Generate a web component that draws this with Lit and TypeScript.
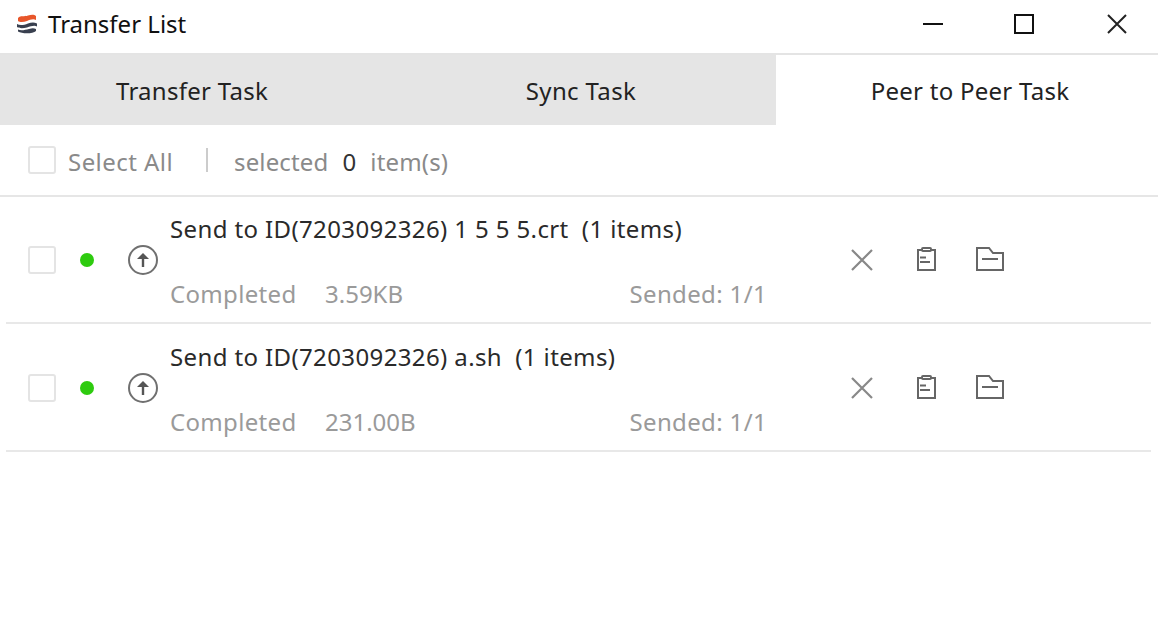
import { LitElement, html, css } from "lit";
import { customElement } from "lit/decorators.js";

const rows = [
  { title: "Send to ID(7203092326) 1 5 5 5.crt\u00a0\u00a0(1 items)", size: "3.59KB" },
  { title: "Send to ID(7203092326) a.sh\u00a0\u00a0(1 items)", size: "231.00B" },
];

@customElement("app-root")
export class AppRoot extends LitElement {
  static styles = css`
    :host { display: block; width: 1158px; height: 635px; background: #fff; overflow: hidden;
      font-family: "Noto Sans", "Open Sans", sans-serif; color: #222; }
    * { box-sizing: border-box; }
    .titlebar { height: 55px; display: flex; align-items: center; border-bottom: 2px solid #e4e4e4; padding: 0 31px 5px 16px; }
    .logo { width: 22px; height: 22px; display: block; }
    .title { margin: 0 0 2px 10px; font-size: 24px; color: #111; flex: 1; }
    .winbtns { display: flex; gap: 71px; }
    .winbtn { display: block; width: 20px; height: 20px; }
    .winbtn.close { margin-left: 2px; }
    .tabs { display: grid; grid-template-columns: 388px 388px 382px; height: 70px; }
    .tab { background: #e5e5e5; display: flex; align-items: center; justify-content: center; font-size: 24px; color: #222; letter-spacing: 0.27px; }
    .tab.first { padding-right: 4px; }
    .tab.second { padding-right: 2px; letter-spacing: 0.35px; }
    .tab.active { background: #fff; padding-left: 6px; }
    .toolbar { height: 72px; display: flex; align-items: center; padding-left: 28px; border-bottom: 2px solid #e6e6e6; font-size: 24px; color: #8a8a8a; }
    .check { width: 28px; height: 28px; border: 2px solid #e4e4e4; border-radius: 3px; flex: none; background: #fff; }
    .selall { margin: 2px 0 0 12px; width: 138px; letter-spacing: 0.45px; }
    .sep { width: 2px; height: 24px; background: #ccc; }
    .selected { margin: 2px 0 0 26px; letter-spacing: 0.15px; display: flex; gap: 14px; }
    .count { color: #333; }
    .rows { margin-top: -1px; }
    .row { height: 128px; margin: 0 7px 0 6px; border-bottom: 2px solid #e8e8e8; display: flex; align-items: center; padding: 2px 0 0 22px; }
    .dot { width: 14px; height: 14px; border-radius: 50%; background: #2ecb0f; margin-left: 24px; flex: none; }
    .up { width: 32px; height: 32px; margin-left: 33px; flex: none; display: block; }
    .body { width: 597px; margin-left: 11px; height: 124px; display: flex; flex-direction: column; justify-content: space-between; padding: 12px 0 9px; flex: none; }
    .rowtitle { font-size: 24px; color: #2a2a2a; letter-spacing: 0.38px; white-space: nowrap; line-height: 38px; }
    .meta { display: flex; font-size: 24px; color: #9a9a9a; line-height: 38px; white-space: nowrap; }
    .status { width: 155px; letter-spacing: 0.33px; }
    .size { flex: 1; }
    .sended { letter-spacing: 0.35px; }
    .actions { display: flex; align-items: center; margin-left: 77px; gap: 28px; }
    .actions svg { width: 36px; height: 36px; display: block; }
  `;

  private logo() {
    return html`<svg class="logo" viewBox="0 0 22 22">
      <path d="M2 5 C5 2 8 4 12 2.500 C15 1.500 18 1 20 3 L20 7 C17 5.500 14 7 11 8 C8 9 4 9.500 2 8Z" fill="#e8562a"/>
      <path d="M1 11 C4 13 8 12 12 10.500 C15 9.500 18 9 21 10.500 L21 13.500 C18 12 15 13.500 11 14.500 C7 15.500 3 15.500 1 14Z" fill="#39404f"/>
      <path d="M2 16.500 C5 18 9 17 13 16 C16 15 18 15 20 16 L20 18 C17 21 6 21 2 18.500Z" fill="#39404f"/>
    </svg>`;
  }

  private upIcon() {
    return html`<svg class="up" viewBox="0 0 32 32" fill="none" stroke="#707070" stroke-width="2">
      <circle cx="16" cy="16" r="14"/>
      <path d="M16 23V13" stroke="#555" stroke-width="2.400"/>
      <path d="M10 15 L16 9 L22 15Z" fill="#555" stroke="none"/>
    </svg>`;
  }

  private actionIcons() {
    return html`<div class="actions">
      <svg viewBox="0 0 36 36" fill="none" stroke="#888" stroke-width="2.200"><path d="M8 8L28 28M28 8L8 28"/></svg>
      <svg viewBox="0 0 36 36" fill="none" stroke="#666" stroke-width="2">
        <path d="M14 8H10V28H27V8H23"/>
        <rect x="14" y="6" width="9" height="3" rx="1"/>
        <path d="M12 15.500H18M12 20H22" />
      </svg>
      <svg viewBox="0 0 36 36" fill="none" stroke="#666" stroke-width="2">
        <path d="M5 28V6H17L21 11H31V28Z"/>
        <path d="M10 17H26"/>
      </svg>
    </div>`;
  }

  render() {
    return html`
      <div class="titlebar">
        ${this.logo()}
        <div class="title">Transfer List</div>
        <div class="winbtns">
          <svg class="winbtn" viewBox="0 0 20 20" fill="none" stroke="#111" stroke-width="2"><path d="M0 10H20"/></svg>
          <svg class="winbtn" viewBox="0 0 20 20" fill="none" stroke="#111" stroke-width="2"><rect x="1" y="1" width="18" height="18"/></svg>
          <svg class="winbtn close" viewBox="0 0 20 20" fill="none" stroke="#222" stroke-width="2"><path d="M1 1L19 19M19 1L1 19"/></svg>
        </div>
      </div>
      <div class="tabs">
        <div class="tab first">Transfer Task</div>
        <div class="tab second">Sync Task</div>
        <div class="tab active">Peer to Peer Task</div>
      </div>
      <div class="toolbar">
        <div class="check"></div>
        <div class="selall">Select All</div>
        <div class="sep"></div>
        <div class="selected"><span>selected</span><span class="count">0</span><span>item(s)</span></div>
      </div>
      <div class="rows">
      ${rows.map((r) => html`
        <div class="row">
          <div class="check"></div>
          <div class="dot"></div>
          ${this.upIcon()}
          <div class="body">
            <div class="rowtitle">${r.title}</div>
            <div class="meta"><span class="status">Completed</span><span class="size">${r.size}</span><span class="sended">Sended: 1/1</span></div>
          </div>
          ${this.actionIcons()}
        </div>`)}
      </div>
    `;
  }
}
